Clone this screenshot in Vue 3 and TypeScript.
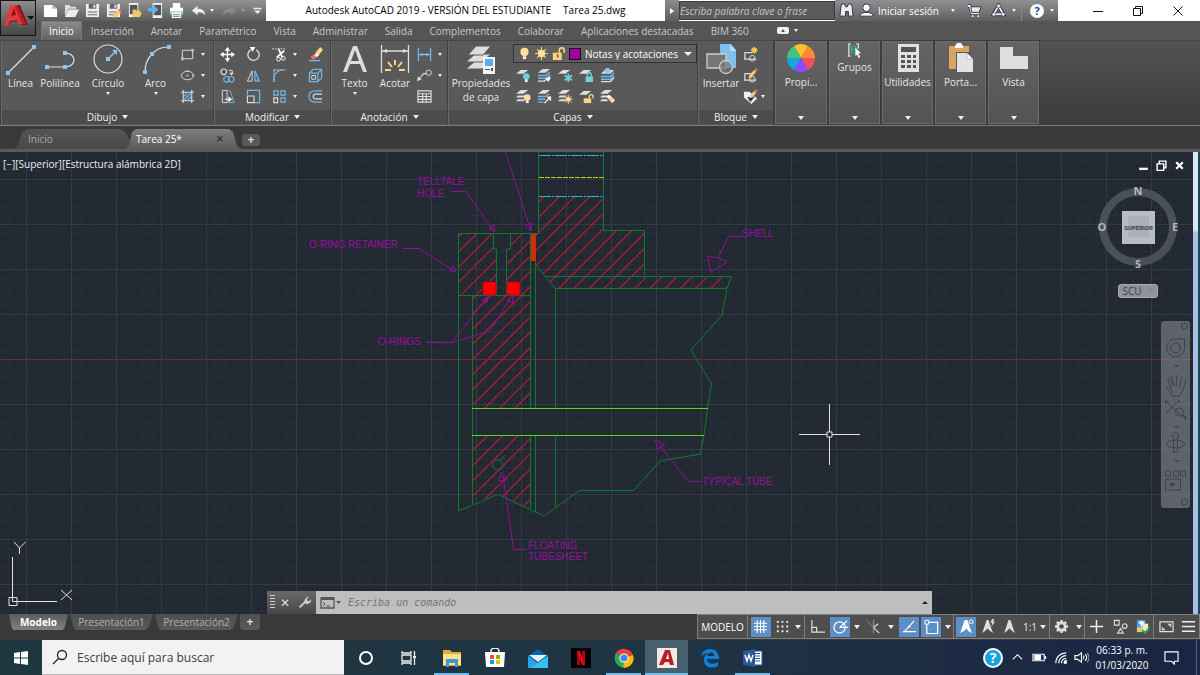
<script setup lang="ts">
import { ref } from 'vue'

const icons: Record<string, string> = {
  newFile: '<path fill="#fff" d="M1 2h9l5 4v9H1z"/><path fill="#b8b8b8" d="M10 2v4h5z"/>',
  open: '<path fill="#ddd" d="M1 2h5l1 2h6v2H5l-4 8z"/><path fill="#efefef" d="M5 7h11l-4 8H1z"/>',
  save: '<path fill="#eee" d="M1 1h14v14H1z"/><path fill="#666" d="M4 1h8v5H4zM3 9h10v1H3zM3 12h10v1H3z"/><path fill="#eee" d="M9 2h2v3H9z"/>',
  saveAs: '<path fill="#eee" d="M1 1h14v14H1z"/><path fill="#666" d="M4 1h8v5H4zM3 9h10v1H3zM3 12h6v1H3z"/><path fill="#eee" d="M9 2h2v3H9z"/><path fill="#f7c66b" d="M8 12l5-5 3 3-5 5-3 1z"/><path fill="#e2603c" d="M13 7l1-1 2 2v2z"/>',
  openMobile: '<path fill="#f2f2f2" d="M2 0h10v15H2z"/><path fill="#555" d="M3 2h8v10H3z"/><path fill="#f2c767" d="M6 7h3l1 1h4v2h2l-2 5H6z"/>',
  saveMobile: '<path fill="#f2f2f2" d="M5 0h10v16H5z"/><path fill="#555" d="M6 2h8v11H6z"/><path fill="#5cb2f0" d="M0 5h6V2l5 5-5 5V9H0z"/>',
  print: '<path fill="#fff" d="M4 0h8v5H4zM1 5h14v7H1z"/><path fill="#7cc0ee" d="M1 9h14v3H1z"/><path fill="#fff" d="M3 10h10v6H3z"/><path fill="#777" d="M4 12h8v1H4zM4 14h8v1H4z"/>',
  undo: '<path fill="#eee" d="M1 8l6-5v3c5 0 8 2 8 7-2-3-4-3-8-3v3z"/>',
  redo: '<path fill="#8a8a8a" d="M15 8L9 3v3c-5 0-8 2-8 7 2-3 4-3 8-3v3z"/>',
  more: '<path fill="#eee" d="M2 4h12v2H2zM3 8h10l-5 5z"/>',
  binocular: '<path fill="#eee" stroke="#28304a" d="M2 4l1-3h3l1 3h2l1-3h3l1 3 1 10h-5V9H7v5H1z"/>',
  user: '<circle cx="8" cy="5" r="4" fill="#fff" stroke="#28304a"/><path fill="#fff" stroke="#28304a" d="M1 14c0-3 3-3 5-4h4c2 1 5 1 5 4z"/>',
  cart: '<path fill="none" stroke="#28304a" stroke-width="3.500" d="M1 3h2l2 8h8"/><path fill="none" stroke="#eee" stroke-width="2" d="M1 3h2l2 8h8"/><path fill="#e8e8e8" stroke="#28304a" d="M4 4h11l-2 6H5z"/><g fill="#eee" stroke="#28304a" stroke-width=".6"><circle cx="6" cy="14" r="1.500"/><circle cx="12" cy="14" r="1.500"/></g>',
  cloudA: '<path fill="none" stroke="#28304a" stroke-width="4" d="M8 3l5 9H3z"/><path fill="none" stroke="#eee" stroke-width="2" d="M8 3l5 9H3z"/><g fill="#eee" stroke="#28304a" stroke-width=".6"><circle cx="8" cy="3" r="2"/><circle cx="3" cy="12" r="2"/><circle cx="13" cy="12" r="2"/></g>',
  line: '<path stroke="#ddd" stroke-width="1.200" d="M2 29L28 3"/><path fill="#8ec6f0" d="M0 27h4v4H0zM26 1h4v4h-4z"/>',
  polyline: '<path fill="none" stroke="#ddd" stroke-width="1.200" d="M2 23h18c12 0 12-14 0-14"/><path fill="#8ec6f0" d="M0 21h4v4H0zM18 21h4v4h-4zM18 7h4v4h-4z"/>',
  circle: '<circle cx="15" cy="15" r="14" fill="none" stroke="#ddd" stroke-width="1.200"/><path stroke="#8ec6f0" stroke-width="1.500" d="M15 15l8-8"/><path fill="#8ec6f0" d="M13 13h4v4h-4zM19 6h5v5z"/>',
  arc: '<path fill="none" stroke="#ddd" stroke-width="1.200" d="M4 28C4 14 14 3 27 3"/><path fill="#8ec6f0" d="M2 26h4v4H2zM9 8h4v4H9zM26 1h4v4h-4z"/>',
  rect: '<path fill="none" stroke="#ddd" d="M2.500 3.500h11v9h-11z"/><path fill="#8ec6f0" d="M1 11h3v3H1zM12 2h3v3h-3z"/>',
  ellipse: '<ellipse cx="8" cy="8" rx="6.500" ry="4.500" fill="none" stroke="#ddd"/><path fill="#8ec6f0" d="M7 7h2v2H7zM7 2h2v2H7zM13 7h2v2h-2z"/>',
  hatch: '<path fill="none" stroke="#ddd" stroke-width="1.200" d="M3.500 1v14M12.500 1v14M1 3.500h14M1 12.500h14"/><path stroke="#72b7ea" stroke-width="1.300" d="M4 8l4-4M4 12l8-8M8 12l4-4"/>',
  move: '<path stroke="#fff" stroke-width="1.400" d="M8 3v10M3 8h10"/><path fill="#fff" d="M8 0l3 4H5zM8 16l3-4H5zM0 8l4-3v6zM16 8l-4-3v6z"/>',
  rotate: '<path fill="none" stroke="#ddd" stroke-width="1.400" d="M11 3a6 6 0 1 1-6 0"/><path fill="#fff" d="M4 0h6L7 5z"/>',
  trim: '<path stroke="#ddd" stroke-dasharray="2 1" d="M0 2h15"/><path stroke="#fff" stroke-width="1.800" d="M7 2l4 9M13 4L5 11"/><circle cx="12" cy="12" r="2" fill="none" stroke="#fff"/><circle cx="7" cy="13" r="2" fill="none" stroke="#fff"/>',
  erase: '<path fill="#ffd487" d="M8 6l5-6 3 3-5 6z"/><path fill="#f6f1e8" d="M6 9l3-3 3 3-3 2z"/><path fill="#f07048" d="M3 10l3-2 3 3-2 2H4z"/><path stroke="#72b7ea" stroke-width="1.500" d="M1 14.500h12"/>',
  copy: '<circle cx="4" cy="4" r="3" fill="none" stroke="#ddd" stroke-width="1.200"/><path fill="none" stroke="#ddd" d="M9 2.500h4V6"/><path fill="#ddd" d="M10 5h5l-3 3z"/><g fill="none" stroke="#72b7ea" stroke-width="1.200"><circle cx="7" cy="12" r="3"/><circle cx="12" cy="12" r="3"/></g>',
  mirror: '<path fill="none" stroke="#ddd" d="M6.500 3v11h-5z"/><path fill="#3d7aa8" stroke="#8ec6f0" d="M9.500 3v11h5z"/>',
  fillet: '<path fill="none" stroke="#ddd" stroke-dasharray="2 1" d="M2 2h13M2 2v13"/><path fill="none" stroke="#72b7ea" stroke-width="1.300" d="M2 15V12C2 6 6 2 12 2"/>',
  explode: '<path fill="none" stroke="#72b7ea" stroke-width="1.300" d="M1.500 5.500h9v9h-9zM1.500 5.500l4-4h9v9l-4 4M10.500 5.500l4-4"/><path fill="none" stroke="#ddd" d="M4 8h4v4H4z"/>',
  stretch: '<path fill="none" stroke="#ddd" d="M2.500 1.500h5v13h-5z"/><path fill="none" stroke="#72b7ea" d="M8 2l3 0 4 12.500H8"/><path stroke="#fff" d="M5 11h5"/><path fill="#fff" d="M9 8l4 3-4 3z"/>',
  scale: '<path fill="none" stroke="#72b7ea" stroke-width="1.300" d="M1.500 6V1.500h13v13H9"/><path fill="none" stroke="#ddd" stroke-width="1.200" d="M1.500 7.500h7v7h-7z"/>',
  array: '<g fill="none" stroke-width="1.300"><path stroke="#ddd" d="M2 9.500h4v5H2z"/><path stroke="#72b7ea" d="M2 2h4.500v4.500H2zM9.500 2H14v4.500H9.500zM9.500 9.500H14V14H9.500z"/></g>',
  offset: '<path fill="none" stroke="#72b7ea" stroke-width="1.300" d="M15 2H7a6 6 0 0 0 0 12h8"/><path fill="none" stroke="#ddd" stroke-width="1.300" d="M15 5.500H8a2.500 2.500 0 0 0 0 5h7"/>',
  text: '<path fill="#ddd" fill-rule="evenodd" d="M13 2h4l10 26h-4l-3-8H10l-3 8H3zM11 17h8L15 6z"/>',
  dim: '<path stroke="#ddd" stroke-width="1.300" d="M1.500 1v28M28.500 1v28M2 7h26"/><path fill="#ddd" d="M2 7l5-2v4zM28 7l-5-2v4z"/><path stroke="#ffd487" stroke-width="2" d="M15 16v5M8 18l4 5M22 18l-4 5M5 26h6M19 26h6"/>',
  dimSmall: '<path stroke="#72b7ea" stroke-width="1.300" d="M1.500 1v14M14.500 1v14"/><path stroke="#ddd" d="M2 8h12"/><path fill="#72b7ea" d="M2 8l4-2v4zM14 8l-4-2v4z"/>',
  leader: '<path fill="none" stroke="#ddd" stroke-width="1.200" d="M2 12l5-6h3"/><path fill="#ddd" d="M0 14l1-5 4 3z"/><circle cx="12.500" cy="5" r="2.800" fill="none" stroke="#ddd"/>',
  table: '<path fill="none" stroke="#ddd" stroke-width="1.200" d="M1 2h14v12H1zM1 5h14M1 8h14M1 11h14M6 5v9M10 5v9"/>',
  layers: '<g fill="#ddd" stroke="#5a5a5a"><path d="M0 25l9-8h16l-9 8z"/><path d="M0 18l9-8h16l-9 8z"/><path d="M2 11l8-9h15l-8 9z"/></g><path fill="#f4f4f4" d="M17 13h12v17H17z"/><path fill="#58aeea" d="M19 15h8v7h-8z"/><path fill="#555" d="M19 25h5v1h-5zM25 24h2v3h-2z"/>',
  bulb: '<circle cx="8" cy="6" r="5" fill="#ffe19a"/><path fill="#ffe19a" d="M6 9h4v3H6z"/><path fill="#eee" d="M6 12h4v3H6z"/>',
  sun: '<path stroke="#ffd070" stroke-width="1.300" d="M8 0v16M0 8h16M2.500 2.500l11 11M13.500 2.500l-11 11"/><circle cx="8" cy="8" r="4.500" fill="#ffe19a"/>',
  unlock: '<path fill="none" stroke="#ffd27a" stroke-width="2" d="M9 7V4a3 3 0 0 1 6 0v3"/><path fill="#ffd27a" d="M1 7h11v9H1z"/><path fill="#665" d="M6 9h2v4H6z"/>',
  layOff: '<path fill="#ddd" d="M0 6l5-4h8L8 6z"/><circle cx="11" cy="9" r="3.500" fill="#6fd0e0"/><path fill="#eee" d="M9.500 12h3v3h-3z"/>',
  layIso: '<path fill="#ddd" d="M1 5l5-4h8l-5 4z"/><path fill="none" stroke="#6fb5e8" stroke-width="1.500" d="M1 8h8l5-4M1 11h8l5-4"/><path fill="none" stroke="#ddd" stroke-width="1.500" d="M1 14h7l6-5"/><path fill="#fff" d="M9 11l6-1-3 5z"/>',
  layFreeze: '<path fill="#ddd" d="M0 6l5-4h8L8 6z"/><path stroke="#6fd0e0" stroke-width="2" d="M11 6v9M7 8l8 5M15 8l-8 5"/>',
  layLock: '<path fill="#ddd" d="M0 6l5-4h8L8 6z"/><path fill="none" stroke="#6fd0e0" stroke-width="1.500" d="M9 9V7a2 2 0 0 1 4 0v2"/><path fill="#6fd0e0" d="M7 9h8v6H7z"/>',
  layCur: '<path fill="#ddd" d="M1 6l4-4h10l-4 4z"/><circle cx="8" cy="3" r="3" fill="#8ec6f0"/><path fill="none" stroke="#6fb5e8" stroke-width="1.600" d="M1 9h10l4-4M1 12h10l4-4"/><path fill="none" stroke="#ddd" stroke-width="1.500" d="M1 14.500h10l4-4"/>',
  layOn: '<path fill="#ddd" d="M0 5l5-4h8L8 5zM0 9l2-2h8l-2 2zM0 13l2-2h7v2z"/><circle cx="12" cy="9" r="3.500" fill="#ffe19a"/><path fill="#eee" d="M10.500 12h3v3h-3z"/>',
  layUniso: '<path fill="#ddd" d="M1 5l5-4h8l-5 4z"/><path fill="none" stroke="#6fb5e8" stroke-width="1.500" d="M1 8h8l4-3M1 11h8M1 14h6"/><path stroke="#fff" stroke-width="1.300" d="M8 15l6-6"/><path fill="#fff" d="M10 8h5v5z"/>',
  layThaw: '<path fill="#ddd" d="M0 5l5-4h8L8 5zM0 9l2-2h7v2zM0 13l2-2h6v2z"/><path stroke="#ffd070" d="M11 6v10M6 11h10M7.500 7.500l7 7M14.500 7.500l-7 7"/><circle cx="11" cy="11" r="2.500" fill="#ffe19a"/>',
  layUnlock: '<path fill="#ddd" d="M0 6l5-4h8L8 6z"/><path fill="none" stroke="#ffd27a" stroke-width="1.500" d="M11 10V8a2 2 0 0 1 4 0v2"/><path fill="#ffd27a" d="M5 10h8v5H5z"/>',
  layMatch: '<path fill="#ddd" d="M0 5l5-4h8L8 5zM0 9l2-2h7v2zM0 13l2-2h6v2z"/><path fill="#fff" d="M7 8l3-2 6 6-3 3z"/><path fill="#ffd27a" d="M9 11l3-3 3 3-3 3z"/>',
  insert: '<path fill="#7cc0f0" d="M14 0h11l5 6v18H14z"/><path fill="#b8defa" d="M24 0v7h6z"/><path fill="#777" stroke="#ccc" stroke-width="1.300" d="M1 10h19v14H1z"/><circle cx="20" cy="23" r="6.500" fill="#777" fill-opacity=".7" stroke="#ccc" stroke-width="1.300"/>',
  blkNew: '<path fill="none" stroke="#ddd" stroke-width="1.300" d="M10 6H2v7h6M1 13h13"/><circle cx="10" cy="12" r="3" fill="none" stroke="#ddd"/><path stroke="#ffc850" stroke-width="1.500" d="M12 0v7M8.500 3.500h7M9.500 1l5 5M14.500 1l-5 5"/>',
  blkEdit: '<path fill="none" stroke="#ddd" stroke-width="1.300" d="M8 6H2v7h6M1 13h13"/><circle cx="10" cy="12" r="3" fill="none" stroke="#ddd"/><path fill="#ffc978" d="M7 7l5-5 2 2-5 6-3 1z"/><path fill="#ef6848" d="M12 2l2-2 2 2-2 2z"/>',
  blkAttr: '<path fill="#eee" d="M1 3h6l8 7-6 6-8-7z"/><path stroke="#555" stroke-width="1.400" d="M5 9l3 4 4-5"/><path fill="#ffc978" d="M8 6l4-4 2 2-4 5-3 1z"/><path fill="#ef6848" d="M12 2l2-2 2 2-2 2z"/>',
  colors: '<path fill="#ffc12e" d="M15 15L8 3a14 14 0 0 1 14 0z"/><path fill="#ff8b35" d="M15 15l7-12a14 14 0 0 1 7 12z"/><path fill="#f0505c" d="M15 15h14a14 14 0 0 1-7 12z"/><path fill="#8c4bff" d="M15 15l7 12a14 14 0 0 1-14 0z"/><path fill="#1aa6dc" d="M15 15L8 27a14 14 0 0 1-7-12z"/><path fill="#3ec680" d="M15 15H1A14 14 0 0 1 8 3z"/>',
  groups: '<path fill="none" stroke="#ddd" stroke-width="1.400" d="M4 1H2v13h2M10 1h2v5"/><path fill="#3fae72" d="M4 3h6v8H4z"/><path fill="#2c6b49" d="M6 4h2v2H6zM6 8h2v2H6z"/><path fill="#fff" d="M9 5l6 6h-3l2 4-2 1-1-4-2 2z"/>',
  calc: '<path fill="#e0e0e0" d="M5 1h21v28H5z"/><path fill="#555" d="M8 4h15v5H8zM8 12h4v3H8zM14 12h4v3h-4zM20 12h3v3h-3zM8 17h4v3H8zM14 17h4v3h-4zM20 17h3v3h-3zM8 22h4v3H8zM14 22h4v3h-4zM20 22h3v3h-3z"/>',
  paste: '<path fill="#d9a460" d="M3 3h20v23H3z"/><path fill="#fff" d="M9 3l2-3h4l2 3v2H9z"/><path fill="#5a5a5a" d="M10 9h15v3H12v14h-2z"/><path fill="#e2e2e2" d="M11 10h10l6 6v13H11z"/><path fill="#fff" stroke="#888" stroke-width=".5" d="M21 10v6h6z"/>',
  view: '<path fill="#dedede" d="M1 4h13v9h15v13H1z"/>',
  hash: '<path stroke="#fff" stroke-width="1.200" d="M4.500 1v14M8 1v14M11.500 1v14M1 4.500h14M1 8h14M1 11.500h14"/>',
  dots: '<path fill="#eee" d="M2 2h2v2H2zM7 2h2v2H7zM12 2h2v2h-2zM2 7h2v2H2zM7 7h2v2H7zM12 7h2v2h-2zM2 12h2v2H2zM7 12h2v2H7zM12 12h2v2h-2z"/>',
  ortho: '<path fill="none" stroke="#ddd" stroke-width="1.300" d="M2 1v13h14M2 9h5v5"/>',
  polar: '<circle cx="7" cy="9" r="6" fill="none" stroke="#fff" stroke-width="1.300"/><path stroke="#fff" stroke-width="1.300" d="M7 9l8-7M7 9h9"/>',
  isoDraft: '<path stroke="#d05050" stroke-width="1.200" d="M1 2l7 7"/><path stroke="#ddd" stroke-width="1.200" d="M8 9l6 6M8 9l5-4"/><path stroke="#60b070" stroke-width="1.200" d="M8 1v14"/>',
  otrack: '<path fill="none" stroke="#fff" stroke-width="1.200" d="M2 14L13 2M1 13.500h14"/><path fill="#fff" d="M7 7h2v2H7z"/>',
  osnap: '<path fill="none" stroke="#fff" stroke-width="1.300" d="M4 3.500h10.500v12H3V5"/><path fill="#5d8fc7" stroke="#fff" d="M1 1.500h4v4H1z"/>',
  annoVis: '<path fill="#fff" d="M6 1h3l4 12 1 2-4-2-2-3-3 3-4 2 1-2z"/><circle cx="13" cy="3" r="2" fill="none" stroke="#fff"/>',
  annoAuto: '<path fill="#ddd" d="M6 1h2l4 12 2 2-4-2-3-3-3 3-3 2 1-2zM12 0l-2 4h2l-1 4 4-5h-2l1-3z"/>',
  anno: '<path fill="#ddd" d="M7 1h2l4 12 1 2-3-2-3-3-3 3-3 2 1-2z"/>',
  gear: '<circle cx="8" cy="8" r="4" fill="none" stroke="#ddd" stroke-width="3"/><path stroke="#ddd" stroke-width="2.500" d="M8 1v3M8 12v3M1 8h3M12 8h3M3 3l2 2M11 11l2 2M13 3l-2 2M5 11l-2 2"/>',
  plus: '<path stroke="#eee" stroke-width="1.600" d="M8 1v14M1 8h14"/>',
  isolate: '<path fill="none" stroke="#ddd" stroke-width="1.200" d="M1.500 1.500h5v5h-5zM5 15l3-5 3 5z"/><circle cx="12.500" cy="7.500" r="2.500" fill="none" stroke="#ddd" stroke-width="1.200"/>',
  graphics: '<path fill="#4da3e0" d="M2 1h9v9H2z"/><path fill="#fff" d="M4 3h6v2H4zM6 2h2v6H6z"/><path fill="#e8c770" d="M2 9h6v5H2z"/><path fill="#efe8d0" d="M8 5h6v8H8z"/><path fill="none" stroke="#35a04c" stroke-width="2" d="M8 12l3 3 5-7"/>',
  clean: '<path fill="none" stroke="#ddd" stroke-width="1.300" d="M1 3h14v10.500H1z"/><path fill="#ddd" d="M9 5h4v4zM3 12V8l4 4z"/>',
  menu: '<path stroke="#eee" stroke-width="1.600" d="M1 3h14M1 8h14M1 13h14"/>',
  cortana: '<circle cx="10" cy="10" r="6" fill="none" stroke="#fff" stroke-width="2"/>',
  taskview: '<path fill="none" stroke="#eee" stroke-width="1.300" d="M3 7h9v6H3zM3 3v2h9V3M3 17v-2h9v2M15.500 3v14"/><path fill="#eee" d="M14 8h3v2h-3z"/>',
  explorer: '<path fill="#e8a92c" d="M1 2h7l2 2h9v14H1z"/><path fill="#ffe08a" d="M1 6h18v11H1z"/><path fill="#3f98dc" d="M4 11h12v8h-3v-4H7v4H4z"/>',
  store: '<path fill="none" stroke="#fff" stroke-width="1.400" d="M6 5V3a4 3 0 0 1 8 0v2"/><path fill="#fff" d="M0 4h20l-1 15H1z"/><path fill="#f25022" d="M5 7h4v4H5z"/><path fill="#7fba00" d="M11 7h4v4h-4z"/><path fill="#00a4ef" d="M5 12h4v4H5z"/><path fill="#ffb900" d="M11 12h4v4h-4z"/>',
  mail: '<path fill="#0b62b5" d="M0 8l10-7 10 7v4H0z"/><path fill="#e8f0f4" d="M1 7h18l-9 7z"/><path fill="#2aa5e4" d="M0 8l10 7-7 5H0z"/><path fill="#38c0f4" d="M20 8v12H2z"/>',
  netflix: '<path fill="#000" d="M0 0h20v20H0z"/><path fill="#b1060f" d="M6 3h3v14H6zM11 3h3v14h-3z"/><path fill="#e50914" d="M6 3h3l5 14h-3z"/>',
  chrome: '<path fill="#ea4335" d="M10 10L2 5a9.700 9.700 0 0 1 17 2z"/><path fill="#fbbc05" d="M10 10l9-3a9.700 9.700 0 0 1-9 13z"/><path fill="#34a853" d="M10 10v0l0 9.700A9.700 9.700 0 0 1 2 5z"/><path fill="#fbbc05" d="M10 14l4-3-5 9z"/><circle cx="10" cy="10" r="4.600" fill="#fff"/><circle cx="10" cy="10" r="3.600" fill="#4285f4"/>',
  acad: '<path fill="#f4e8e6" d="M0 0h20v20H0z"/><path fill="#b3202a" fill-rule="evenodd" d="M8 2h5l4 15h-4l-1-3H8l-2 3H2zM9 11h3l-1-6z"/>',
  edge: '<path fill="#0f7fdc" fill-rule="evenodd" d="M1 9C2 3 6 1 10 1c6 0 9 4 9 10H7c0 5 6 6 11 3v4C10 22 3 18 4 11c0-3 2-5 4-6-3 0-5 1-7 4zM7 8h7c0-5-6-4-7 0z"/>',
  word: '<path fill="#fff" stroke="#2b579a" d="M10 3h9v14h-9z"/><path stroke="#2b579a" d="M11 5.500h6M11 8h6M11 10.500h6M11 13h6"/><path fill="#2b579a" d="M0 3l12-2v18L0 17z"/><path fill="none" stroke="#fff" stroke-width="1.400" d="M2 7l2 6 2-6 2 6 2-6"/>',
}

interface Tool { icon: string; label: string; drop?: boolean }
const t = (icon: string, label: string, drop = false): Tool => ({ icon, label, drop })

const quick = [t('newFile', 'Nuevo'), t('open', 'Abrir'), t('save', 'Guardar'), t('saveAs', 'Guardar como'), t('openMobile', 'Abrir desde web'), t('saveMobile', 'Guardar en web'), t('print', 'Trazar')]
const menus = ['Inicio', 'Inserción', 'Anotar', 'Paramétrico', 'Vista', 'Administrar', 'Salida', 'Complementos', 'Colaborar', 'Aplicaciones destacadas', 'BIM 360']
const activeMenu = ref('Inicio')
const drawBig = [t('line', 'Línea'), t('polyline', 'Polilínea'), t('circle', 'Círculo', true), t('arc', 'Arco', true)]
const drawSmall = [t('rect', 'Rectángulo'), t('ellipse', 'Elipse'), t('hatch', 'Sombreado')]
const modify = [
  t('move', 'Desplaza'), t('rotate', 'Gira'), t('trim', 'Recortar', true), t('erase', 'Borra'),
  t('copy', 'Copia'), t('mirror', 'Simetría'), t('fillet', 'Empalme', true), t('explode', 'Descomponer'),
  t('stretch', 'Estirar'), t('scale', 'Escala'), t('array', 'Matriz', true), t('offset', 'Desfase'),
]
const noteBig = [t('text', 'Texto', true), t('dim', 'Acotar')]
const noteSmall = [t('dimSmall', 'Lineal', true), t('leader', 'Directriz', true), t('table', 'Tabla')]
const layerTools = ['layOff', 'layIso', 'layFreeze', 'layLock', 'layCur', 'layOn', 'layUniso', 'layThaw', 'layUnlock', 'layMatch']
const blockTools = [t('blkNew', 'Crear bloque'), t('blkEdit', 'Editar bloque'), t('blkAttr', 'Editar atributos', true)]
const collapsed = [t('colors', 'Propi...'), t('groups', 'Grupos'), t('calc', 'Utilidades'), t('paste', 'Porta...'), t('view', 'Vista')]

interface Cell { kind: 'icon' | 'arrow' | 'scale'; icon?: string; on?: boolean; sep?: boolean }
const status: Cell[] = [
  { kind: 'icon', icon: 'hash', on: true }, { kind: 'icon', icon: 'dots' }, { kind: 'arrow', sep: true },
  { kind: 'icon', icon: 'ortho' }, { kind: 'icon', icon: 'polar', on: true }, { kind: 'arrow' },
  { kind: 'icon', icon: 'isoDraft' }, { kind: 'arrow' }, { kind: 'icon', icon: 'otrack', on: true },
  { kind: 'icon', icon: 'osnap', on: true }, { kind: 'arrow', sep: true }, { kind: 'icon', icon: 'annoVis', on: true },
  { kind: 'icon', icon: 'annoAuto' }, { kind: 'icon', icon: 'anno' }, { kind: 'scale', sep: true },
  { kind: 'icon', icon: 'gear' }, { kind: 'arrow', sep: true }, { kind: 'icon', icon: 'plus' },
  { kind: 'icon', icon: 'isolate' }, { kind: 'icon', icon: 'graphics', sep: true },
  { kind: 'icon', icon: 'clean' }, { kind: 'icon', icon: 'menu' },
]

const apps = [
  { icon: 'cortana', label: 'Cortana' }, { icon: 'taskview', label: 'Vista de tareas' },
  { icon: 'explorer', label: 'Explorador', run: true }, { icon: 'store', label: 'Tienda' },
  { icon: 'mail', label: 'Correo' }, { icon: 'netflix', label: 'Netflix' },
  { icon: 'chrome', label: 'Chrome', run: true }, { icon: 'acad', label: 'AutoCAD', run: true, front: true },
  { icon: 'edge', label: 'Edge' }, { icon: 'word', label: 'Word', run: true },
]

/* 45 degree section hatch: every line satisfies x + y = c */
const hatchPath = Array.from({ length: 52 }, (_, i) => {
  const c = 604 + i * 15.2
  return `M${(c - 560).toFixed(1)} 560L${(c - 150).toFixed(1)} 150`
}).join('')
const command = ref('')
const keyword = ref('')
const layer = ref('Notas y acotaciones')
</script>

<template>
  <div class="app">
    <header class="titlebar">
      <button class="logo" aria-label="Menú de aplicación">
        <svg viewBox="0 0 34 34"><path fill="#8e1118" d="M11 4h8l8 20h-6l-2-4-9 1-4 4H3z" /><path fill="#e03a3c" fill-rule="evenodd" d="M9 4h7l6 19h-5l-1-4-7 1-3 5H3zM10 15l5-1-2-7z" /><path fill="#c01e26" d="M16 4l9 19h-4L14 6z" /><path fill="#111" d="M26 15h7l-3 4z" /></svg>
      </button>
      <div class="quick">
        <button v-for="q in quick" :key="q.icon" class="qbtn" :aria-label="q.label"><svg viewBox="0 0 16 16" v-html="icons[q.icon]" /></button>
        <button class="qbtn wide" aria-label="Deshacer"><svg viewBox="0 0 16 16" v-html="icons.undo" /><i class="tri" /></button>
        <button class="qbtn wide" aria-label="Rehacer"><svg viewBox="0 0 16 16" v-html="icons.redo" /><i class="tri dim" /></button>
        <button class="qbtn last" aria-label="Personalizar"><svg viewBox="0 0 16 16" v-html="icons.more" /></button>
      </div>
      <h1 class="title"><span>Autodesk AutoCAD 2019 - VERSIÓN DEL ESTUDIANTE</span><span>Tarea 25.dwg</span></h1>
      <button class="expand" aria-label="Expandir"><i /></button>
      <input v-model="keyword" class="keyword" type="text" aria-label="Buscar" placeholder="Escriba palabra clave o frase">
      <div class="account">
        <button class="abtn" aria-label="Buscar ayuda"><svg viewBox="0 0 16 16" v-html="icons.binocular" /></button>
        <button class="login"><svg viewBox="0 0 16 16" v-html="icons.user" /><span>Iniciar sesión</span><i class="tri" /></button>
        <button class="abtn" aria-label="Tienda de aplicaciones"><svg viewBox="0 0 16 16" v-html="icons.cart" /></button>
        <button class="abtn drop" aria-label="Conectar"><svg viewBox="0 0 16 16" v-html="icons.cloudA" /><i class="tri" /></button>
        <button class="abtn drop help" aria-label="Ayuda"><span>?</span><i class="tri" /></button>
      </div>
      <div class="winctl">
        <button aria-label="Minimizar"><svg viewBox="0 0 10 10"><path d="M0 5.500h10" /></svg></button>
        <button aria-label="Restaurar"><svg viewBox="0 0 10 10"><path d="M.5 2.500h7v7h-7zM2.500 2.500v-2h7v7h-2" /></svg></button>
        <button aria-label="Cerrar"><svg viewBox="0 0 10 10"><path d="M.5.500l9 9M9.500.500l-9 9" /></svg></button>
      </div>
    </header>

    <nav class="menus">
      <button v-for="m in menus" :key="m" :class="{ active: m === activeMenu }" @click="activeMenu = m">{{ m }}</button>
      <button class="ribmode" aria-label="Minimizar cinta"><b /><i class="tri" /></button>
    </nav>

    <section class="ribbon">
      <div class="panel draw">
        <div class="body">
          <button v-for="b in drawBig" :key="b.icon" class="big"><svg viewBox="0 0 30 31" v-html="icons[b.icon]" /><span>{{ b.label }}</span><i v-if="b.drop" class="tri" /></button>
          <div class="stack">
            <button v-for="s in drawSmall" :key="s.icon" class="small" :aria-label="s.label"><svg viewBox="0 0 16 16" v-html="icons[s.icon]" /><i class="tri" /></button>
          </div>
        </div>
        <button class="ptitle">Dibujo<i /></button>
      </div>
      <div class="panel modify">
        <div class="body mgrid">
          <button v-for="s in modify" :key="s.icon" class="small" :aria-label="s.label"><svg viewBox="0 0 16 16" v-html="icons[s.icon]" /><i v-if="s.drop" class="tri" /></button>
        </div>
        <button class="ptitle">Modificar<i /></button>
      </div>
      <div class="panel note">
        <div class="body">
          <button v-for="b in noteBig" :key="b.icon" class="big"><svg viewBox="0 0 30 31" v-html="icons[b.icon]" /><span>{{ b.label }}</span><i v-if="b.drop" class="tri" /></button>
          <div class="stack">
            <button v-for="s in noteSmall" :key="s.icon" class="small" :aria-label="s.label"><svg viewBox="0 0 16 16" v-html="icons[s.icon]" /><i v-if="s.drop" class="tri" /></button>
          </div>
        </div>
        <button class="ptitle">Anotación<i /></button>
      </div>
      <div class="panel layer">
        <div class="body">
          <button class="big"><svg viewBox="0 0 30 31" v-html="icons.layers" /><span>Propiedades<br>de capa</span></button>
          <div class="lright">
            <div class="combo">
              <svg viewBox="0 0 16 16" v-html="icons.bulb" /><svg viewBox="0 0 16 16" v-html="icons.sun" /><svg viewBox="0 0 16 16" v-html="icons.unlock" /><b />
              <select v-model="layer" aria-label="Capa actual"><option>Notas y acotaciones</option><option>Capa 0</option></select>
              <i class="tri large" />
            </div>
            <div class="lgrid"><button v-for="l in layerTools" :key="l" class="small" :aria-label="l"><svg viewBox="0 0 16 16" v-html="icons[l]" /></button></div>
          </div>
        </div>
        <button class="ptitle">Capas<i /></button>
      </div>
      <div class="panel block">
        <div class="body">
          <button class="big"><svg viewBox="0 0 30 31" v-html="icons.insert" /><span>Insertar</span></button>
          <div class="stack">
            <button v-for="s in blockTools" :key="s.icon" class="small" :aria-label="s.label"><svg viewBox="0 0 16 16" v-html="icons[s.icon]" /><i v-if="s.drop" class="tri" /></button>
          </div>
        </div>
        <button class="ptitle">Bloque<i /></button>
      </div>
      <button v-for="c in collapsed" :key="c.icon" class="folded">
        <svg :class="{ mini: c.icon === 'groups' }" :viewBox="c.icon === 'groups' ? '0 0 16 16' : '0 0 30 30'" v-html="icons[c.icon]" />
        <span>{{ c.label }}</span><i />
      </button>
    </section>

    <nav class="files">
      <button class="ftab">Inicio</button>
      <button class="ftab current">Tarea 25*<b>✕</b></button>
      <button class="add" aria-label="Nueva ficha">+</button>
    </nav>

    <main class="work">
      <div class="canvas">
        <svg class="model" viewBox="0 152 1193 462" preserveAspectRatio="xMinYMin slice" aria-label="Plano">
          <defs>
            <pattern id="minor" width="9" height="9" x="26" y="179" patternUnits="userSpaceOnUse"><path class="gminor" d="M.5 0v9M0 .5h9" /></pattern>
            <pattern id="major" width="45" height="45" x="26" y="179" patternUnits="userSpaceOnUse"><path class="gmajor" d="M.5 0v45M0 .5h45" /></pattern>
            <clipPath id="section">
              <path d="M458 233h35v16h3v32h-14v14h-24zM510 233h21v62h-10v-14h-15v-32h4zM472 295h59v113h-59zM472 435h59v74l-33-15-26 10zM539 197h65v33h40v46h88l-5 12H555l-20-24v-31h4z" />
            </clipPath>
          </defs>
          <rect y="152" width="1193" height="462" fill="url(#minor)" />
          <rect y="152" width="1193" height="462" fill="url(#major)" />
          <path class="axis" d="M0 359.500h1193" />
          <path class="hatching" clip-path="url(#section)" :d="hatchPath" />
          <g class="outline">
            <path d="M458.500 511V233.500H538.500V152M603.500 152V230.500H644.500V276.500M545.500 276.500H731.500L727 288.500H555.500L535.500 265" />
            <path d="M458 295.500H531M493.500 233v16h3v46M510.500 233v16h-4v46M530.500 233v175M530.500 435v73M535.500 233v175M535.500 435v77M555.500 288v120M555.500 435v72M472.500 295v209" />
            <path d="M727 288.500L722 315 691 350 711.500 384 707.500 408 704 435 700.500 454 660 461 633.500 490.500H579.500L544 516 498 494.500 458.500 511" />
            <circle cx="497.500" cy="465" r="5" /><path d="M500 461l5-6" />
          </g>
          <path class="tube" d="M472 408.500H708M472 435.500H704" />
          <path class="oring" d="M483 282h13v13h-13zM507 282h13v13h-13z" />
          <path class="seal" d="M531 234h5v27h-5z" />
          <path class="cyan" d="M539 155.500h65M539 196.500h65" />
          <path class="yellow" d="M539 177.500h65" />
          <g class="leaders">
            <path d="M505.500 152L531 231M525 226l7-3-1 8zM451 191.500h15L493 230M489 228l5-3 1 7zM403 248.500h16L454 271M450 271l3-5 3 6zM742 236.500h-13.500L718 258M707.500 256.500q11 0 19.500 6l-16.500 9.500z" />
            <path d="M426 342.500h26l35-45M482 300l6-3-1 6zM452 342.500l38-11.500 21-34M507 300l6-4v7zM701 481.500H688.500L659 445M655.500 440.500l9 4-7 5zM526 549.500H513.500L503 476M498.500 481l3-9 6 8z" />
          </g>
          <g class="labels">
            <text x="417" y="185">TELLTALE</text><text x="417" y="197">HOLE</text>
            <text x="309" y="248">O-RING RETAINER</text><text x="378" y="345">O-RINGS</text>
            <text x="742" y="237">SHELL</text><text x="702" y="485">TYPICAL TUBE</text>
            <text x="528" y="549">FLOATING</text><text x="528" y="560">TUBESHEET</text>
          </g>
          <path class="cursor" d="M829.500 404v28M829.500 437v28M799 434.500h28M832 434.500h28M827 432h5v5h-5z" />
          <path class="ucs" d="M12.500 557v44.500H57M9 597.500h8v8H9zM14 542l5.500 6 6-6M19.500 548v6M61 590l11 10M72 590l-11 10" />
        </svg>
        <div class="vpview"><button>[−]</button><button>[Superior]</button><button>[Estructura alámbrica 2D]</button></div>
        <div class="vpctl">
          <button aria-label="Minimizar vista"><svg viewBox="0 0 10 10"><path d="M1 8h8" stroke-width="2" /></svg></button>
          <button aria-label="Restaurar vista"><svg viewBox="0 0 10 10"><path d="M1 3.500h6v6H1zM3 3V1h6v6H7" /></svg></button>
          <button aria-label="Cerrar vista"><svg viewBox="0 0 10 10"><path d="M2 2l6 6M8 2L2 8" stroke-width="2" /></svg></button>
        </div>
        <div class="cube">
          <svg viewBox="0 0 86 86">
            <circle cx="42" cy="42" r="35" fill="none" stroke="#4a5059" stroke-width="8" />
            <path fill="#b9bcc0" d="M26 26h33v33H26z" /><path fill="#aab0ba" d="M32 31h21v21H32z" />
            <text class="face" x="42.500" y="45">SUPERIOR</text>
            <text x="42" y="10">N</text><text x="42" y="83">S</text><text x="6" y="46">O</text><text x="79" y="46">E</text>
          </svg>
          <button>SCU<span>▽</span></button>
        </div>
        <div class="navbar">
          <svg viewBox="0 0 28 187">
            <circle cx="23" cy="5" r="3" /><circle cx="23" cy="181" r="3" />
            <path d="M14 18h9v10a9 9 0 1 1-9-10z" /><circle cx="14" cy="27" r="5" />
            <path d="M5 66l4 1 2 5M7 60l3 7M10 55l3 10M15 54v11M20 56l-2 10M24 61l-3 9-3 5h-7L5 66M7 60l-1-2 2-1 4 8M24 61l1-2-2-1" />
            <path d="M4 80l15 14M18 79L5 92M4 80h3M4 80v3M18 79v3M5 92v-3" /><circle cx="18" cy="91" r="4" /><path stroke-width="2" d="M21 94l4 4" />
            <ellipse cx="14" cy="123" rx="9" ry="4" /><path d="M12 131v-16h-2l4-4 4 4h-2v16z" />
            <path d="M4 150h5v5H4zM12 150h5v5h-5zM19 150h5v5h-5zM4 158h15v11H4z" /><path class="fill" d="M9 161v5l5-3zM12 44h6l-3 2zM12 105h6l-3 2zM12 139h6l-3 2z" />
          </svg>
        </div>
        <form class="cmd" @submit.prevent>
          <span class="grip" /><button class="cx" type="button" aria-label="Cerrar">✕</button>
          <button class="cw" type="button" aria-label="Personalizar"><svg viewBox="0 0 16 16"><path fill="none" stroke="#ccc" stroke-width="2.500" d="M2 14l7-7" /><path fill="#ccc" d="M8 5l3-4 2 0-2 3 1 2 2 0 2-2v3l-4 3-4-1z" /></svg></button>
          <label class="prompt">
            <svg viewBox="0 0 22 12"><path fill="none" stroke="#555" stroke-width="1.300" d="M1 1h13v10H1z" /><path fill="#555" d="M1 0h13v3H1zM16 4h5l-2.500 3z" /><path fill="none" stroke="#555" d="M3 5l2 2-2 2M6 9h4" /></svg>
            <input v-model="command" type="text" aria-label="Comando" placeholder="Escriba un comando">
            <i class="up" />
          </label>
        </form>
      </div>
      <div class="vscroll" /><div class="edge" />
    </main>

    <footer class="bottom">
      <nav class="layouts">
        <button class="current">Modelo</button><button>Presentación1</button><button>Presentación2</button><button class="plus" aria-label="Nueva presentación">+</button>
      </nav>
      <div class="status">
        <button class="mode">MODELO</button>
        <button v-for="(c, i) in status" :key="i" :class="{ sep: c.sep }" :aria-label="c.icon ?? 'Opciones'">
          <span v-if="c.icon" class="ico" :class="{ on: c.on }"><svg viewBox="0 0 16 16" v-html="icons[c.icon]" /></span>
          <span v-else-if="c.kind === 'scale'" class="ratio">1:1<i class="tri wide" /></span>
          <i v-else class="tri wide" />
        </button>
      </div>
    </footer>

    <div class="taskbar">
      <button class="start" aria-label="Inicio"><svg viewBox="0 0 14 14"><path fill="#fff" d="M0 2l6-1v5.500H0zM7 1l7-1v6.500H7zM0 7.500h6V13l-6-1zM7 7.500h7V14l-7-1z" /></svg></button>
      <label class="find"><svg viewBox="0 0 16 16"><circle cx="10" cy="6" r="4.500" fill="none" stroke="#222" stroke-width="1.300" /><path stroke="#222" stroke-width="1.300" d="M7 9l-6 6" /></svg><input type="text" aria-label="Buscar en Windows" placeholder="Escribe aquí para buscar"></label>
      <button v-for="a in apps" :key="a.icon" class="task" :class="{ run: a.run, front: a.front }" :aria-label="a.label"><svg viewBox="0 0 20 20" v-html="icons[a.icon]" /></button>
      <div class="tray">
        <button class="qm" aria-label="Obtener ayuda">?</button>
        <button aria-label="Iconos ocultos"><svg viewBox="0 0 16 16"><path d="M3 10l5-5 5 5" /></svg></button>
        <button aria-label="Batería"><svg viewBox="0 0 16 16"><path d="M1 4.500h12v7H1zM14.500 6.500v3" /><path fill="#fff" d="M3 6h6v4H3z" /></svg></button>
        <button aria-label="Red"><svg viewBox="0 0 16 16"><path d="M2 14C2 7 7 3 13 3M5 14c0-5 4-8 8-8M8 14c0-3 2-5 5-5" /><path fill="#fff" d="M11 14v-2l2-1v3z" /></svg></button>
        <button class="sound" aria-label="Volumen"><svg viewBox="0 0 16 16"><path d="M1 6h3l4-3v10l-4-3H1zM10 6q1.500 2 0 4M12 4.500q3 3.500 0 7" /><path opacity=".5" d="M14 3q4 5 0 10" /></svg></button>
        <button class="clock">06:33 p. m.<br>01/03/2020</button>
        <button class="bell" aria-label="Notificaciones"><svg viewBox="0 0 16 16"><path d="M1 2h14v10h-4v3l-3-3H1z" /></svg></button>
        <button class="peek" aria-label="Mostrar escritorio" />
      </div>
    </div>
  </div>
</template>

<style>
html, body { background: #222933; overflow: hidden; }
</style>

<style scoped>
.app { height: 100vh; display: flex; flex-direction: column; font: 10px/12px "Open Sans", "Noto Sans", sans-serif; color: #e6e6e6; overflow: hidden; }
.app * { box-sizing: border-box; }
button { font: inherit; color: inherit; background: none; border: 0; padding: 0; margin: 0; display: flex; align-items: center; justify-content: center; white-space: nowrap; }
input, select { font: inherit; border: 0; background: none; padding: 0; margin: 0; outline: none; min-width: 0; }
svg { display: block; flex: none; }
.tri { display: inline-block; border: 2px solid transparent; border-top: 3px solid #f0f0f0; border-bottom: 0; flex: none; }
.tri.dim { border-top-color: #999; }
.tri.wide { border-width: 4px 3px 0; }
.tri.large { border-width: 4px 4px 0; }

.titlebar { position: relative; height: 21px; flex: none; display: flex; background: #fff; }
.logo { position: absolute; left: 0; top: 0; width: 36px; height: 36px; z-index: 2; background: linear-gradient(#8c8c8c, #454545); border: 1px solid #151515; }
.logo svg { width: 34px; height: 34px; }
.quick { display: flex; padding-left: 40px; width: 266px; background: linear-gradient(#929292, #5c5c5c); }
.qbtn { width: 21px; }
.qbtn svg { width: 15px; height: 15px; }
.qbtn.wide { width: 31px; gap: 4px; }
.qbtn.last { width: 16px; }
.qbtn.last svg { width: 11px; height: 13px; }
.title { flex: 1; margin: 0; font: inherit; line-height: 21px; color: #000; display: flex; justify-content: center; gap: 12px; white-space: nowrap; }
.expand { width: 14px; background: linear-gradient(#8c8c8c, #5c5c5c); }
.expand i { border: 3px solid transparent; border-left: 4px solid #fff; border-right: 0; }
.keyword { width: 156px; margin: 1px 0; background: #5a5a5a; border: 1px solid #3c3c3c; font-style: italic; color: #fff; }
.keyword::placeholder { color: #c4c4c4; opacity: 1; }
.account { display: flex; width: 223px; background: linear-gradient(#909090, #606060); color: #fff; }
.account svg { width: 15px; height: 15px; }
.abtn { width: 22px; }
.abtn.drop { width: 36px; gap: 6px; }
.login { width: 106px; gap: 4px; justify-content: flex-start; padding-left: 2px; }
.login .tri { margin-left: auto; margin-right: 8px; }
.account .help { width: 37px; border-left: 1px solid #888; padding-left: 4px; }
.help span { width: 14px; height: 14px; border-radius: 50%; background: #fff; color: #1e3f8c; font-weight: 700; line-height: 13px; font-size: 11px; }
.winctl { display: flex; width: 142px; padding-left: 20px; }
.winctl button { width: 40px; }
.winctl svg { width: 10px; height: 10px; fill: none; stroke: #111; stroke-width: 1; }

.menus { display: flex; height: 19px; flex: none; background: #555; padding-left: 41px; color: #c8c8c8; }
.menus button { padding: 0 8px 0 9px; }
.menus .active { background: linear-gradient(#8a8a8a, #626262); color: #fff; padding: 0 7px; border: 1px solid #777; border-bottom: 0; }
.menus .ribmode { gap: 5px; padding: 0 20px; }
.ribmode b { width: 12px; height: 7px; border-radius: 2px; background: #f0f0f0; display: flex; align-items: center; justify-content: center; }
.ribmode b::before { content: ""; border: 2px solid transparent; border-bottom: 3px solid #555; border-top: 0; }

.ribbon { height: 86px; flex: none; display: flex; padding-left: 1px; background: linear-gradient(#525252, #3c3c3c); border-bottom: 1px solid #7c7c7c; border-top: 1px solid #474747; }
.panel { display: flex; flex-direction: column; background: #595959; border-right: 1px solid #414141; border-left: 1px solid #686868; }
.body { height: 69px; display: flex; padding-top: 3px; }
.ptitle { height: 14px; background: #4c4c4c; color: #eee; gap: 5px; }
.ptitle i, .folded i { border: 3px solid transparent; border-top: 4px solid #f0f0f0; border-bottom: 0; }
.big { flex-direction: column; justify-content: flex-start; }
.big svg { width: 30px; height: 31px; }
.big span { margin-top: 1px; line-height: 14px; }
.big .tri { margin-top: 2px; }
.stack { display: grid; grid-template-rows: repeat(3, 21px); }
.small { justify-content: flex-start; gap: 6px; }
.small svg { width: 15px; height: 15px; }
.draw { width: 213px; }
.draw .body { display: grid; grid-template-columns: 37px 42px 54px 41px 36px; }
.draw .stack { padding-left: 4px; }
.modify { width: 117px; }
.mgrid { display: grid; grid-template-columns: 26px 26px 36px 20px; grid-template-rows: repeat(3, 21px); padding-left: 5px; }
.note { width: 117px; }
.note .body { display: grid; grid-template-columns: 45px 40px 30px; }
.note .big:nth-child(2) { padding-right: 4px; }
.layer { width: 250px; }
.layer .body { display: grid; grid-template-columns: 64px 1fr; }
.combo { height: 19px; border: 1px solid #333; background: #606060; display: flex; align-items: center; gap: 4px; padding: 0 4px; }
.combo svg { width: 13px; height: 13px; }
.combo b { width: 12px; height: 12px; background: #a000a0; border: 1px solid #111; }
.combo select { flex: 1; color: #fff; appearance: none; }
.lgrid { display: grid; grid-template-columns: repeat(5, 21px); grid-template-rows: repeat(2, 21px); padding-left: 3px; padding-top: 2px; }
.block { width: 76px; }
.block .body { display: grid; grid-template-columns: 44px 30px; }
.block .small { gap: 3px; }
.folded { width: 52px; margin: 0 0 1px 1px; flex-direction: column; justify-content: flex-start; padding-top: 1px; background: linear-gradient(#646464, #535353); border: 1px solid #6c6c6c; outline: 1px solid #3c3c3c; }
.folded + .folded { margin-left: 2px; width: 51px; }
.folded svg { width: 30px; height: 30px; }
.folded svg.mini { width: 15px; height: 15px; }
.folded span { margin-top: 2px; line-height: 14px; }
.folded i { margin-top: auto; margin-bottom: 3px; }

.files { height: 26px; flex: none; display: flex; align-items: flex-end; padding: 0 0 0 14px; background: #393939; border-bottom: 3px solid #5a5a5a; }
.ftab { width: 120px; height: 20px; justify-content: flex-start; padding-left: 14px; color: #aaa; background: linear-gradient(#555, #484848); clip-path: polygon(0 100%, 4px 80%, 8px 15%, 14px 0, 106px 0, 112px 20%, 100% 100%); }
.ftab.current { width: 115px; margin-left: -8px; padding: 0 17px 0 10px; justify-content: space-between; color: #fff; background: linear-gradient(#7e7e7e, #5c5c5c); clip-path: polygon(0 100%, 3px 80%, 6px 15%, 10px 0, 103px 0, 107px 15%, 111px 85%, 100% 100%); }
.ftab b { color: #333; font-size: 9px; }
.add { width: 18px; height: 12px; margin: 0 0 3px 1px; background: #585858; border-radius: 3px; color: #ddd; font-weight: 700; font-size: 12px; }

.work { flex: 1; min-height: 0; display: flex; }
.canvas { position: relative; flex: 1; min-width: 0; background: #222933; overflow: hidden; }
.model { width: 100%; height: 100%; fill: none; }
.gminor { stroke: #262e38; }
.gmajor { stroke: #323a44; }
.axis { stroke: #742631; }
.hatching { stroke: #b41c30; stroke-width: 1.2; }
.outline { stroke: #0c7c2c; }
.tube { stroke: #58d61e; }
.oring { fill: #f00; stroke: #a02; }
.seal { fill: #d42c06; }
.cyan { stroke: #23b8c4; stroke-dasharray: 12 1 2 1; }
.yellow { stroke: #c8c81e; stroke-dasharray: 5 1; }
.leaders { stroke: #960c9c; }
.labels { fill: #9a0ca0; font: 10px "Liberation Sans", sans-serif; }
.cursor, .ucs { stroke: #e2e2e2; }
.vpview { position: absolute; left: 3px; top: 5px; display: flex; line-height: 14px; color: #eee; }
.vpctl { position: absolute; right: 8px; top: 8px; display: flex; gap: 7px; }
.vpctl svg { width: 11px; height: 11px; fill: none; stroke: #fff; stroke-width: 1.3; }
.cube { position: absolute; right: 11px; top: 33px; width: 86px; display: flex; flex-direction: column; align-items: center; }
.cube svg { width: 86px; height: 86px; overflow: visible; }
.cube text { fill: #b4b8bc; font-weight: 700; font-size: 11px; text-anchor: middle; }
.cube .face { fill: #343b48; font-family: Roboto, sans-serif; font-size: 6px; }
.cube button { margin-top: 13px; margin-right: 3px; width: 40px; height: 14px; border-radius: 3px; background: #8e939b; border: 1px solid #a8adb5; color: #3c424c; gap: 6px; }
.cube button span { font-size: 7px; color: #767b84; }
.navbar { position: absolute; right: 3px; top: 169px; width: 29px; height: 187px; border-radius: 3px; background: rgba(130, 134, 140, .62); }
.navbar svg { width: 29px; height: 187px; fill: none; stroke: #3d434c; stroke-width: 1; }
.navbar .fill { fill: #3d434c; stroke: none; }
.cmd { position: absolute; left: 267px; right: 261px; bottom: 0; height: 23px; display: flex; background: linear-gradient(#6a6a6a, #484848); }
.grip { width: 5px; margin: 3px 2px 4px 3px; background: radial-gradient(circle, #ccc 35%, transparent 45%) 0 0 / 2px 3px; }
.cx { width: 16px; font-size: 12px; color: #ddd; }
.cw { width: 23px; }
.cw svg { width: 13px; height: 13px; }
.prompt { flex: 1; display: flex; align-items: center; background: #bcbec0; padding: 0 4px; gap: 6px; }
.prompt svg { width: 22px; height: 12px; }
.prompt input { flex: 1; font: italic 10px "DejaVu Sans Mono", "Liberation Mono", monospace; color: #333; }
.prompt input::placeholder { color: #777; opacity: 1; }
.up { border: 3px solid transparent; border-bottom: 3px solid #222; border-top: 0; }
.vscroll { width: 5px; background: linear-gradient(#dbe6f6 0 78px, #a9c0e6 80px); }
.edge { width: 2px; background: #1a4650; }

.bottom { height: 26px; flex: none; display: flex; justify-content: space-between; align-items: flex-start; background: #393939; }
.layouts { display: flex; padding-left: 9px; gap: 2px; color: #b0b0b0; }
.layouts button { height: 16px; width: 83px; background: linear-gradient(#4e4e4e, #5a5a5a); clip-path: polygon(0 0, 100% 0, 95% 80%, 91% 100%, 7% 100%, 4% 80%); }
.layouts .current { width: 59px; color: #fff; font-weight: 700; background: linear-gradient(#5c5c5c, #808080); }
.layouts .plus { width: 20px; font-size: 12px; font-weight: 700; color: #ddd; border-radius: 0 0 4px 4px; clip-path: none; }
.status { display: grid; grid-template-columns: 50px 25px 19px 13px 24px 22px 12px 20px 15px 22px 22px 12px 24px 21px 21px 30px 23px 12px 23px 24px 22px 24px 21px; background: #4e4e4e; border: 1px solid #808080; }
.status button { height: 23px; }
.status .mode { color: #fff; border-right: 1px solid #7c7c7c; }
.status .sep { border-right: 1px solid #7c7c7c; }
.ico { width: 20px; height: 20px; display: flex; align-items: center; justify-content: center; }
.ico.on { background: #5d8fc7; }
.ico svg { width: 15px; height: 15px; }
.ratio { display: flex; align-items: center; gap: 3px; }

.taskbar { height: 35px; flex: none; display: flex; background: linear-gradient(90deg, #1e3840, #1f3442 55%, #1a2444); }
.start { width: 42px; }
.start svg { width: 14px; height: 14px; }
.find { width: 302px; background: #f2f2f2; border-bottom: 1px solid #bbb; display: flex; align-items: center; padding-left: 10px; gap: 9px; }
.find svg { width: 16px; height: 16px; }
.find input { flex: 1; font-size: 12px; color: #222; }
.find input::placeholder { color: #3c3c3c; opacity: 1; }
.task { width: 43px; position: relative; }
.task svg { width: 20px; height: 20px; }
.task.front { background: #46606e; }
.task.run::after { content: ""; position: absolute; left: 4px; right: 4px; bottom: 0; height: 2px; background: #76b9ed; }
.task.front::after { left: 0; right: 0; }
.tray { margin-left: auto; display: flex; align-items: center; color: #fff; }
.tray button { width: 22px; height: 35px; }
.tray svg { width: 15px; height: 15px; fill: none; stroke: #fff; stroke-width: 1.2; }
.tray .qm { width: 20px; height: 20px; border-radius: 50%; background: #16a3dd; border: 2px solid #fff; font-weight: 700; font-size: 14px; margin-right: 3px; }
.tray .sound { width: 18px; }
.tray .clock { width: 64px; line-height: 15px; }
.tray .bell { width: 34px; }
.tray .peek { width: 9px; border-right: 1px solid #5a6478; margin-right: 3px; }
</style>
